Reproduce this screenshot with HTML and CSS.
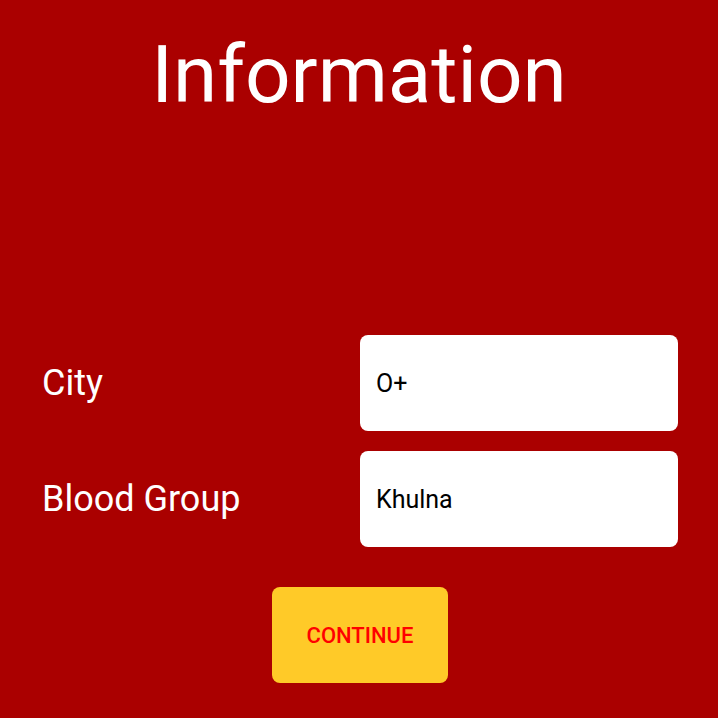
FILE: index.html
```html
<!DOCTYPE html>
<html>
<head>
<meta charset="utf-8">
<link rel="stylesheet" href="styles.css">
</head>
<body>
<div class="screen">
  <h1 class="title">Information</h1>
  <div class="form">
    <div class="row">
      <span class="label">City</span>
      <div class="field">O+</div>
    </div>
    <div class="row">
      <span class="label">Blood Group</span>
      <div class="field">Khulna</div>
    </div>
  </div>
  <div class="actions">
    <button class="btn">CONTINUE</button>
  </div>
</div>
</body>
</html>
```
FILE: styles.css
```css
html, body {
  margin: 0;
  padding: 0;
  background: #aa0000;
}
.screen {
  width: 718px;
  height: 718px;
  box-sizing: border-box;
  padding: 0 40px;
  font-family: Roboto, "Liberation Sans", sans-serif;
  color: #ffffff;
}
.title {
  margin: 0;
  padding-top: 35px;
  font-size: 80px;
  line-height: 80px;
  font-weight: 400;
  text-align: center;
}
.form {
  margin-top: 220px;
  display: flex;
  flex-direction: column;
  gap: 20px;
}
.row {
  display: flex;
  align-items: center;
  justify-content: space-between;
}
.label {
  font-size: 36px;
  padding-left: 2px;
}
.field {
  width: 318px;
  height: 96px;
  box-sizing: border-box;
  background: #ffffff;
  border-radius: 8px;
  padding-left: 16px;
  display: flex;
  align-items: center;
  color: #000000;
  font-size: 25px;
}
.actions {
  margin-top: 40px;
  display: flex;
  justify-content: center;
  padding-left: 2px;
}
.btn {
  width: 176px;
  height: 96px;
  border: none;
  border-radius: 8px;
  background: #ffca28;
  color: #ff0000;
  font-family: Roboto, "Liberation Sans", sans-serif;
  font-size: 22px;
  font-weight: 500;
  padding: 0;
}
```
